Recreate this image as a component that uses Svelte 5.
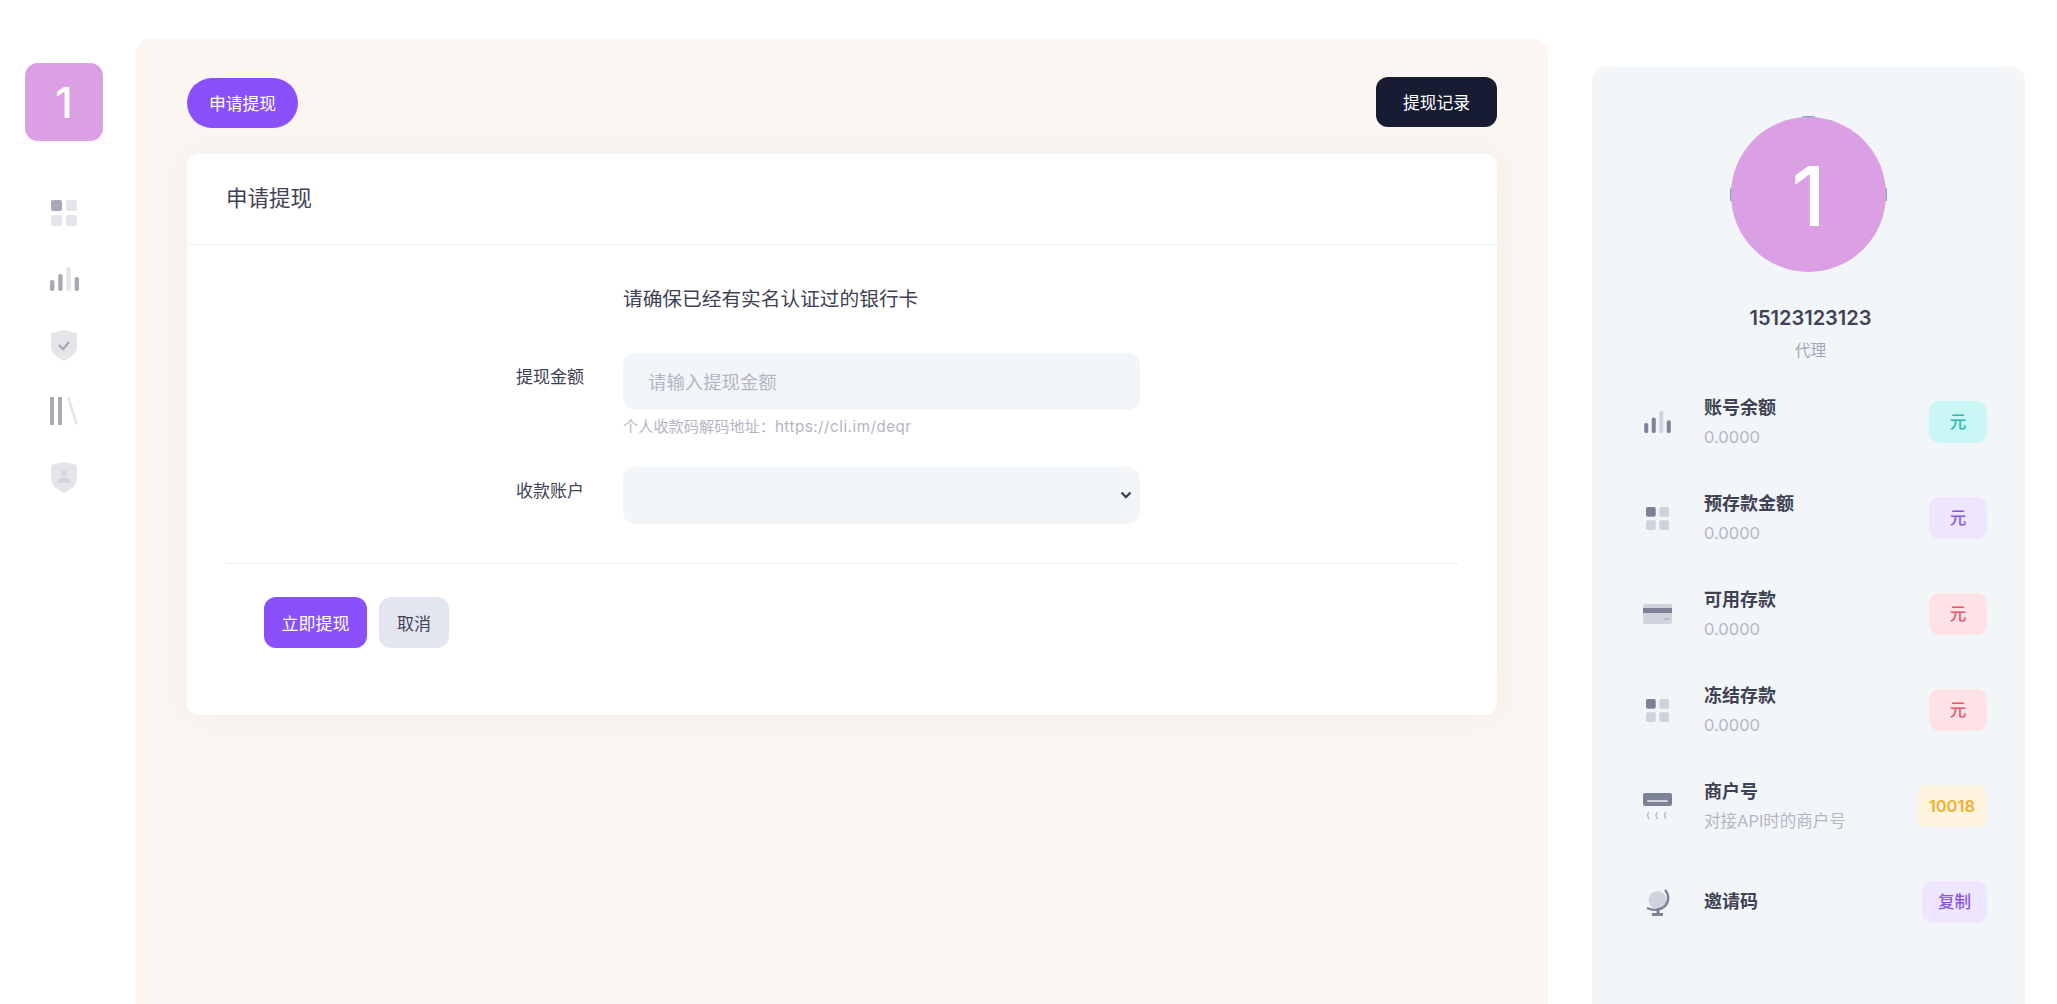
<script>
    const sideIcons = ["grid", "bars", "shieldCheck", "books", "shieldUser"];

    const rows = [
        { icon: "bars", title: "账号余额", sub: "0.0000", badge: "元", tone: "teal" },
        { icon: "grid", title: "预存款金额", sub: "0.0000", badge: "元", tone: "purple" },
        { icon: "card", title: "可用存款", sub: "0.0000", badge: "元", tone: "red" },
        { icon: "grid", title: "冻结存款", sub: "0.0000", badge: "元", tone: "red" },
        { icon: "ac", title: "商户号", sub: "对接API时的商户号", badge: "10018", tone: "yellow" },
        { icon: "globe", title: "邀请码", sub: "", badge: "复制", tone: "purple copy" },
    ];

    let amount = "";
    let account = "";
</script>

{#snippet icon(name)}
    {#if name === "grid"}
        <svg class="ic grid" viewBox="0 0 26 26">
            <rect class="d" width="11" height="11" rx="2" />
            <rect class="f" x="15" width="11" height="11" rx="2" />
            <rect class="f" y="15" width="11" height="11" rx="2" />
            <rect class="f" x="15" y="15" width="11" height="11" rx="2" />
        </svg>
    {:else if name === "bars"}
        <svg class="ic bars" viewBox="0 0 29 24">
            <rect class="d" y="13" width="4.4" height="11" rx="2" />
            <rect class="d" x="8.2" y="7" width="4.4" height="17" rx="2" />
            <rect class="f" x="16.4" width="4.4" height="24" rx="2" />
            <rect class="d" x="24.6" y="10" width="4.4" height="14" rx="2" />
        </svg>
    {:else if name === "shieldCheck"}
        <svg class="ic shield" viewBox="0 0 26 31">
            <path class="f" d="M0 3 13 0l13 3v14c0 7-7 11-13 14C7 28 0 24 0 17Z" />
            <path class="s" d="m8 15 4 4 6-7" />
        </svg>
    {:else if name === "shieldUser"}
        <svg class="ic shield" viewBox="0 0 26 31">
            <path class="f" d="M0 3 13 0l13 3v14c0 7-7 11-13 14C7 28 0 24 0 17Z" />
            <circle class="f" cx="13" cy="11" r="2.6" />
            <path class="f" d="M6.5 21c0-3.500 3-5.500 6.500-5.500s6.500 2 6.500 5.500Z" />
        </svg>
    {:else if name === "books"}
        <svg class="ic books" viewBox="0 0 28 28">
            <rect class="d" width="4" height="28" rx="1" />
            <rect class="d" x="8" width="4" height="28" rx="1" />
            <path class="f" d="M17 1l2.500-1L28 27l-2.500 1Z" />
        </svg>
    {:else if name === "card"}
        <svg class="ic bank" viewBox="0 0 29 20">
            <rect class="f" width="29" height="20" rx="2" />
            <rect class="d" y="4" width="29" height="5" />
            <rect class="f" x="21" y="14" width="5" height="2" />
        </svg>
    {:else if name === "ac"}
        <svg class="ic ac" viewBox="0 0 29 27">
            <rect class="d" width="29" height="13" rx="2" />
            <rect class="line" x="4" y="7" width="21" height="2" rx="1" />
            <path class="w" d="M6 19c-2 2-2 4 0 7M14.500 19c-2 2-2 4 0 7M23 19c-2 2-2 4 0 7" />
        </svg>
    {:else if name === "globe"}
        <svg class="ic globe" viewBox="0 0 25 27">
            <circle class="f" cx="12.500" cy="11" r="9" />
            <path class="s arc" d="M20 1c4 4 4.500 11 .5 15.500C16 21.500 8 22 2 19" />
            <path class="d" d="M11.500 21h3v3h3.500v3H7v-3h4.500Z" />
        </svg>
    {/if}
{/snippet}

<div class="page">
    <aside class="side">
        <div class="logo">1</div>
        <nav class="side__nav">
            {#each sideIcons as name}
                <div class="side__item">{@render icon(name)}</div>
            {/each}
        </nav>
    </aside>

    <main class="main">
        <div class="bar">
            <button class="pill">申请提现</button>
            <button class="record">提现记录</button>
        </div>

        <section class="panel">
            <h1 class="panel__head">申请提现</h1>
            <form class="form" onsubmit={(e) => e.preventDefault()}>
                <p class="notice">请确保已经有实名认证过的银行卡</p>

                <div class="field">
                    <label for="amount">提现金额</label>
                    <div>
                        <input id="amount" type="text" placeholder="请输入提现金额" bind:value={amount} />
                        <div class="hint">个人收款码解码地址：<span class="hint__url">https://cli.im/deqr</span></div>
                    </div>
                </div>

                <div class="field">
                    <label for="account">收款账户</label>
                    <div class="select">
                        <select id="account" bind:value={account}>
                            <option value=""></option>
                        </select>
                        <svg class="chevron" viewBox="0 0 12 8">
                            <path d="M1.500 1.500 6 6l4.500-4.500" />
                        </svg>
                    </div>
                </div>

                <div class="actions">
                    <button class="btn btn--primary" type="submit">立即提现</button>
                    <button class="btn btn--light" type="button">取消</button>
                </div>
            </form>
        </section>
    </main>

    <aside class="profile">
        <div class="avatar">1</div>
        <div class="profile__name">15123123123</div>
        <div class="profile__role">代理</div>

        <ul class="stats">
            {#each rows as row}
                <li class="stat">
                    <div class="stat__icon">{@render icon(row.icon)}</div>
                    <div class="stat__text">
                        <div class="stat__title">{row.title}</div>
                        {#if row.sub}
                            <div class="stat__sub">{row.sub}</div>
                        {/if}
                    </div>
                    <span class="badge {row.tone}">{row.badge}</span>
                </li>
            {/each}
        </ul>
    </aside>
</div>

<style>
    :global(body) {
        background: #fff;
    }

    .page {
        display: grid;
        grid-template-columns: 136px 1412px 433px;
        height: 100vh;
        overflow: hidden;
        font-family: Inter, "Noto Sans CJK SC", sans-serif;
        color: #3f4254;
    }

    /* left rail */
    .side {
        display: flex;
        flex-direction: column;
        align-items: center;
        width: 128px;
        padding-top: 63px;
        box-sizing: border-box;
    }

    .logo {
        width: 78px;
        height: 78px;
        border-radius: 13px;
        background: #db9fe4;
        color: #fff;
        font-size: 42px;
        font-weight: 500;
        line-height: 80px;
        text-align: center;
    }

    .side__nav {
        margin-top: 39px;
        color: #a9a9b5;
    }

    .side__item {
        display: flex;
        align-items: center;
        justify-content: center;
        height: 66px;
    }

    /* icons */
    .ic {
        display: block;
    }

    .grid {
        width: 26px;
        height: 26px;
    }

    .bars {
        width: 29px;
        height: 24px;
    }

    .shield {
        width: 26px;
        height: 31px;
    }

    .books {
        width: 28px;
        height: 28px;
    }

    .ic .d {
        fill: currentColor;
    }

    .ic .f {
        fill: currentColor;
        opacity: 0.3;
    }

    .ic .s {
        fill: none;
        stroke: currentColor;
        stroke-width: 2.4;
    }

    .ic .line {
        fill: #f3f6f9;
        opacity: 0.7;
    }

    .ic .w {
        fill: none;
        stroke: currentColor;
        stroke-width: 1.4;
        opacity: 0.5;
    }

    /* main panel */
    .main {
        margin-top: 38px;
        padding: 39px 51px 0;
        background: #fbf6f1;
        border-radius: 16px 16px 0 0;
    }

    .bar {
        display: flex;
        justify-content: space-between;
        height: 51px;
        margin-bottom: 26px;
    }

    button {
        border: none;
        padding: 0;
        font-family: inherit;
        cursor: pointer;
    }

    .pill {
        align-self: flex-end;
        width: 111px;
        height: 50px;
        border-radius: 25px;
        background: #8950fc;
        color: #fff;
        font-size: 16.800px;
    }

    .record {
        align-self: flex-start;
        width: 121px;
        height: 50px;
        border-radius: 12px;
        background: #181c32;
        color: #fff;
        font-size: 16.800px;
    }

    .panel {
        background: #fff;
        border-radius: 12px;
        box-shadow: 0 0 40px rgba(82, 63, 105, 0.05);
    }

    .panel__head {
        margin: 0;
        padding: 0 39px;
        height: 90px;
        line-height: 89px;
        font-size: 21.500px;
        font-weight: 400;
        color: #3f4254;
        border-bottom: 1px solid #f0f1f4;
    }

    .form {
        margin: 0 39px;
        padding-top: 40px;
    }

    .notice {
        margin: 0 0 40px 397px;
        font-size: 19.700px;
        line-height: 28px;
        color: #3f4254;
    }

    .field {
        display: grid;
        grid-template-columns: 358px 517px;
        column-gap: 39px;
        margin-bottom: 15px;
    }

    .field label {
        padding-top: 12px;
        line-height: 24px;
        font-size: 17px;
        text-align: right;
        color: #3f4254;
    }

    input,
    select {
        display: block;
        box-sizing: border-box;
        width: 100%;
        height: 57px;
        border: none;
        border-radius: 12px;
        outline: none;
        background: #f3f6f9;
        padding: 0 25px;
        font-family: inherit;
        font-size: 18.400px;
        color: #3f4254;
        appearance: none;
    }

    input::placeholder {
        color: #b5b5c3;
    }

    .hint {
        margin-top: 6px;
        margin-bottom: 14px;
        line-height: 22px;
        font-size: 15.200px;
        color: #b5b5c3;
    }

    .hint__url {
        letter-spacing: 0.5px;
    }

    .select {
        position: relative;
    }

    .chevron {
        position: absolute;
        top: 24px;
        right: 8px;
        width: 12px;
        height: 8px;
        pointer-events: none;
    }

    .chevron path {
        fill: none;
        stroke: #3f4254;
        stroke-width: 2.4;
    }

    .actions {
        display: flex;
        gap: 12px;
        margin-top: 39px;
        padding: 33px 0 67px 38px;
        border-top: 1px solid #ecedf1;
    }

    .btn {
        height: 51px;
        border-radius: 12px;
        font-size: 17px;
    }

    .btn--primary {
        width: 103px;
        background: #8950fc;
        color: #fff;
    }

    .btn--light {
        width: 70px;
        background: #e4e6ef;
        color: #3f4254;
    }

    /* right panel */
    .profile {
        margin: 67px 0 0 44px;
        padding: 50px 38px 0 42px;
        background: #f3f6f9;
        border-radius: 13px 13px 0 0;
        width: 433px;
        box-sizing: border-box;
        isolation: isolate;
    }

    .avatar {
        width: 155px;
        height: 155px;
        margin: 0 auto;
        position: relative;
        left: -2px;
        border-radius: 50%;
        background: #db9fe4;
        color: #fff;
        font-size: 82px;
        font-weight: 500;
        line-height: 160px;
        text-align: center;
    }

    /* the sliver of the photo that shows round the avatar */
    .avatar::before {
        content: "";
        position: absolute;
        inset: -0.7px;
        z-index: -1;
        border-radius: 50%;
        background: conic-gradient(#6f9fc4 0 5deg, transparent 5deg 85deg, #6f9fc4 85deg 95deg, transparent 95deg 265deg, #6f9fc4 265deg 275deg, transparent 275deg 355deg, #6f9fc4 355deg);
    }

    .profile__name {
        margin-top: 32px;
        line-height: 28px;
        font-size: 20px;
        font-weight: 600;
        text-align: center;
        color: #3f4254;
    }

    .profile__role {
        margin-top: 8px;
        line-height: 22px;
        font-size: 15.700px;
        text-align: center;
        color: #a1a5b7;
    }

    .stats {
        list-style: none;
        margin: 33px 0 0;
        padding: 0;
    }

    .stat {
        display: flex;
        align-items: center;
        height: 54px;
        margin-bottom: 42px;
    }

    .stat__icon {
        display: flex;
        justify-content: center;
        width: 46px;
        margin-right: 24px;
        color: #7e8299;
    }

    .stat__icon .grid {
        width: 23px;
        height: 23px;
    }

    .stat__icon .bars {
        width: 27px;
        height: 22px;
    }

    .bank {
        width: 29px;
        height: 20px;
    }

    .ac {
        width: 29px;
        height: 27px;
    }

    .globe {
        width: 25px;
        height: 27px;
    }

    .stat__text {
        flex: 1;
        min-width: 0;
    }

    .stat__title {
        line-height: 24px;
        font-size: 18px;
        font-weight: 600;
        color: #3f4254;
    }

    .stat__sub {
        margin-top: 6px;
        line-height: 22px;
        font-size: 16.500px;
        color: #b5b5c3;
    }

    .badge {
        min-width: 58px;
        box-sizing: border-box;
        padding: 0 12px;
        height: 42px;
        border-radius: 10px;
        line-height: 42px;
        text-align: center;
        font-size: 16.500px;
        font-weight: 500;
    }

    .copy {
        min-width: 65px;
    }

    .teal {
        background: #c9f7f5;
        color: #2bb8ad;
    }

    .purple {
        background: #eee5ff;
        color: #8a58e6;
    }

    .red {
        background: #ffe2e5;
        color: #e4576a;
    }

    .yellow {
        background: #fff4de;
        color: #eeb030;
        font-weight: 600;
    }
</style>
